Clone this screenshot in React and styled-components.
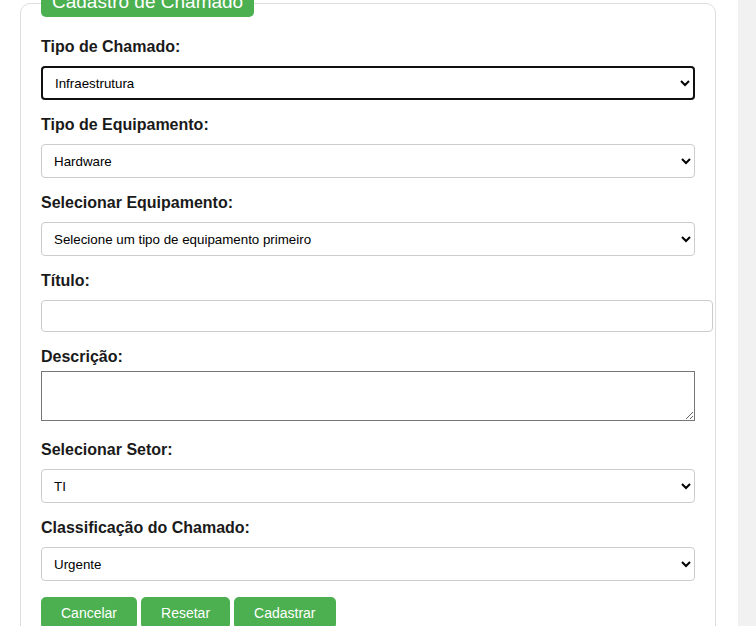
import React from "react";
import styled, { createGlobalStyle } from "styled-components";

const Global = createGlobalStyle`
  html, body { margin: 0; padding: 0; background: #fff; }
  body { font-family: "Liberation Sans", Arial, sans-serif; }
`;

const Viewport = styled.div`
  height: 626px;
  overflow: hidden;
  display: flex;
  background: #fff;
`;

const Main = styled.main`
  flex: 1;
  padding: 0 22px 0 20px;
`;

const ScrollTrack = styled.div`
  width: 18px;
  background: #f1f1f1;
`;

const Card = styled.fieldset`
  margin: -11px 0 0 0;
  padding: 21px 20px 20px 20px;
  border: 1px solid #ddd;
  border-radius: 10px;
  min-width: 0;
`;

const Legend = styled.legend`
  margin-left: 0;
  padding: 2px 11px 4px;
  background: #4caf50;
  color: #fff;
  font-size: 19px;
  line-height: 22px;
  border-radius: 5px;
`;

const Label = styled.label`
  display: block;
  font-size: 16px;
  line-height: 18px;
  font-weight: bold;
  color: #1a1a1a;
  margin-bottom: ${(p) => (p.$tight ? "5px" : "10px")};
`;

const Select = styled.select`
  display: block;
  width: 100%;
  height: 34px;
  box-sizing: border-box;
  padding: 0 8px;
  margin: 0 0 16px;
  font-family: "Liberation Sans", Arial, sans-serif;
  font-size: 13.333px;
  color: #000;
  background: #fff;
  border: ${(p) => (p.$focused ? "2px solid #101010" : "1px solid #ccc")};
  border-radius: 4px;
  outline: none;
`;

const TextInput = styled.input`
  display: block;
  box-sizing: content-box;
  width: 100%;
  height: 14px;
  padding: 8px;
  margin: 0 0 16px;
  font-family: "Liberation Sans", Arial, sans-serif;
  font-size: 13.333px;
  border: 1px solid #ccc;
  border-radius: 4px;
`;

const TextArea = styled.textarea`
  display: block;
  box-sizing: border-box;
  width: 100%;
  height: 50px;
  margin: 0 0 20px;
  padding: 2px;
  font-family: "Liberation Sans", Arial, sans-serif;
  font-size: 13.333px;
  border: 1px solid #767676;
  border-radius: 0;
`;

const Buttons = styled.div`
  display: flex;
  gap: 4px;
  margin-top: 2px;
`;

const Button = styled.button`
  padding: 8px 20px;
  background: #4caf50;
  color: #fff;
  border: none;
  border-radius: 5px;
  font-family: "Liberation Sans", Arial, sans-serif;
  font-size: 14px;
  line-height: 16px;
  cursor: pointer;
`;

export default function App() {
  return (
    <>
      <Global />
      <Viewport>
        <Main>
          <Card>
            <Legend>Cadastro de Chamado</Legend>
            <Label>Tipo de Chamado:</Label>
            <Select $focused defaultValue="infra">
              <option value="infra">Infraestrutura</option>
            </Select>
            <Label>Tipo de Equipamento:</Label>
            <Select defaultValue="hw">
              <option value="hw">Hardware</option>
            </Select>
            <Label>Selecionar Equipamento:</Label>
            <Select defaultValue="">
              <option value="">Selecione um tipo de equipamento primeiro</option>
            </Select>
            <Label>Título:</Label>
            <TextInput type="text" />
            <Label $tight>Descrição:</Label>
            <TextArea />
            <Label>Selecionar Setor:</Label>
            <Select defaultValue="ti">
              <option value="ti">TI</option>
            </Select>
            <Label>Classificação do Chamado:</Label>
            <Select defaultValue="urgente">
              <option value="urgente">Urgente</option>
            </Select>
            <Buttons>
              <Button type="button">Cancelar</Button>
              <Button type="button">Resetar</Button>
              <Button type="submit">Cadastrar</Button>
            </Buttons>
          </Card>
        </Main>
        <ScrollTrack />
      </Viewport>
    </>
  );
}
